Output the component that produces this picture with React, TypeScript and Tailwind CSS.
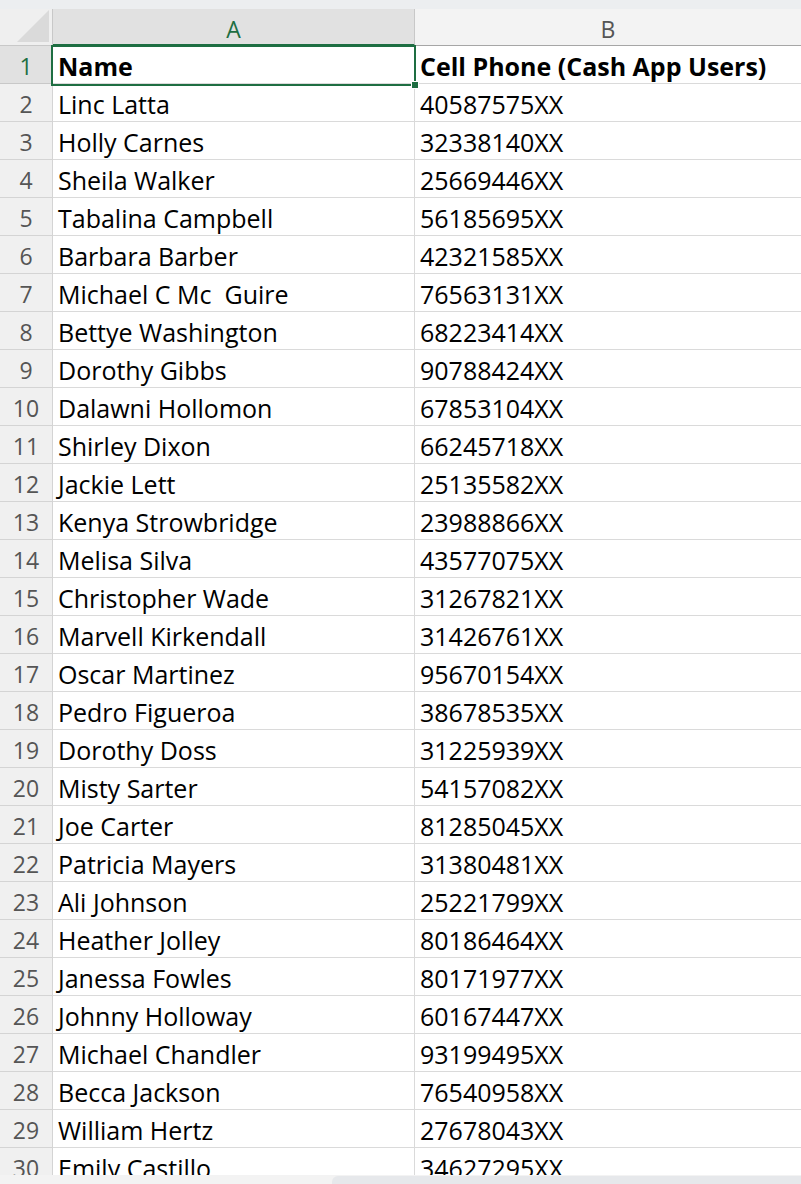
const rows: [string, string][] = [
  ["Linc Latta", "40587575XX"],
  ["Holly Carnes", "32338140XX"],
  ["Sheila Walker", "25669446XX"],
  ["Tabalina Campbell", "56185695XX"],
  ["Barbara Barber", "42321585XX"],
  ["Michael C Mc  Guire", "76563131XX"],
  ["Bettye Washington", "68223414XX"],
  ["Dorothy Gibbs", "90788424XX"],
  ["Dalawni Hollomon", "67853104XX"],
  ["Shirley Dixon", "66245718XX"],
  ["Jackie Lett", "25135582XX"],
  ["Kenya Strowbridge", "23988866XX"],
  ["Melisa Silva", "43577075XX"],
  ["Christopher Wade", "31267821XX"],
  ["Marvell Kirkendall", "31426761XX"],
  ["Oscar Martinez", "95670154XX"],
  ["Pedro Figueroa", "38678535XX"],
  ["Dorothy Doss", "31225939XX"],
  ["Misty Sarter", "54157082XX"],
  ["Joe Carter", "81285045XX"],
  ["Patricia Mayers", "31380481XX"],
  ["Ali Johnson", "25221799XX"],
  ["Heather Jolley", "80186464XX"],
  ["Janessa Fowles", "80171977XX"],
  ["Johnny Holloway", "60167447XX"],
  ["Michael Chandler", "93199495XX"],
  ["Becca Jackson", "76540958XX"],
  ["William Hertz", "27678043XX"],
  ["Emily Castillo", "34627295XX"],
];

export default function App() {
  return (
    <div
      className="relative w-[801px] h-[1184px] overflow-hidden bg-white"
      style={{ fontFamily: "'Open Sans', 'Noto Sans', sans-serif" }}
    >
      {/* top strip */}
      <div className="h-[9px] bg-[#eceef0]" />

      {/* column headers */}
      <div className="flex h-[37px] text-[23px] leading-none">
        <div className="relative w-[53px] shrink-0 bg-[#efefef] border-r border-b border-[#c8c8c8]">
          <svg className="absolute right-[3px] bottom-[3px]" width="32" height="32" viewBox="0 0 32 32">
            <polygon points="32,0 32,32 0,32" fill="#dadada" />
          </svg>
        </div>
        <div className="w-[362px] shrink-0 bg-[#e1e1e1] border-r border-[#c8c8c8] border-b-2 border-b-[#1e6e42] flex items-end justify-center pb-[3px] text-[#1e6e42]">
          A
        </div>
        <div className="flex-1 bg-[#f3f3f3] border-b border-[#a6a6a6] flex items-end justify-center pb-[4px] text-[#555]">
          B
        </div>
      </div>

      {/* data rows */}
      <div className="flex flex-col text-[25px] leading-none">
        {[["Name", "Cell Phone (Cash App Users)"] as [string, string], ...rows].map(([name, phone], i) => (
          <div key={i} className="flex h-[38px]">
            <div
              className={
                i === 0
                  ? "w-[53px] shrink-0 bg-[#e1e1e1] border-r border-b border-[#c8c8c8] flex items-end justify-center pb-[5px] text-[23px] text-[#1e6e42]"
                  : "w-[53px] shrink-0 bg-[#f0f0f0] border-r border-b border-[#d4d4d4] flex items-end justify-center pb-[5px] text-[23px] text-[#555]"
              }
            >
              {i + 1}
            </div>
            <div
              className={
                "w-[362px] shrink-0 border-r border-b border-[#dadada] flex items-end pl-[5px] pb-[4px] whitespace-pre text-black " +
                (i === 0 ? "font-bold" : "")
              }
            >
              {name}
            </div>
            <div
              className={
                "flex-1 border-b border-[#dadada] flex items-end pl-[5px] pb-[4px] whitespace-pre text-black " +
                (i === 0 ? "font-bold" : "")
              }
            >
              {phone}
            </div>
          </div>
        ))}
      </div>

      {/* selection box on A1 */}
      <div className="absolute left-[51px] top-[45px] w-[365px] h-[41px] border-2 border-[#1e6e42]" />
      <div className="absolute left-[411px] top-[81px] w-[8px] h-[8px] bg-[#1e6e42] border border-white" />

      {/* bottom scrollbar strip */}
      <div className="absolute left-0 right-0 bottom-0 h-[9px] bg-[#f3f3f3]">
        <div className="absolute left-[332px] right-0 top-[1px] bottom-0 bg-[#e6e8eb] rounded-tl-[6px]" />
      </div>
    </div>
  );
}
